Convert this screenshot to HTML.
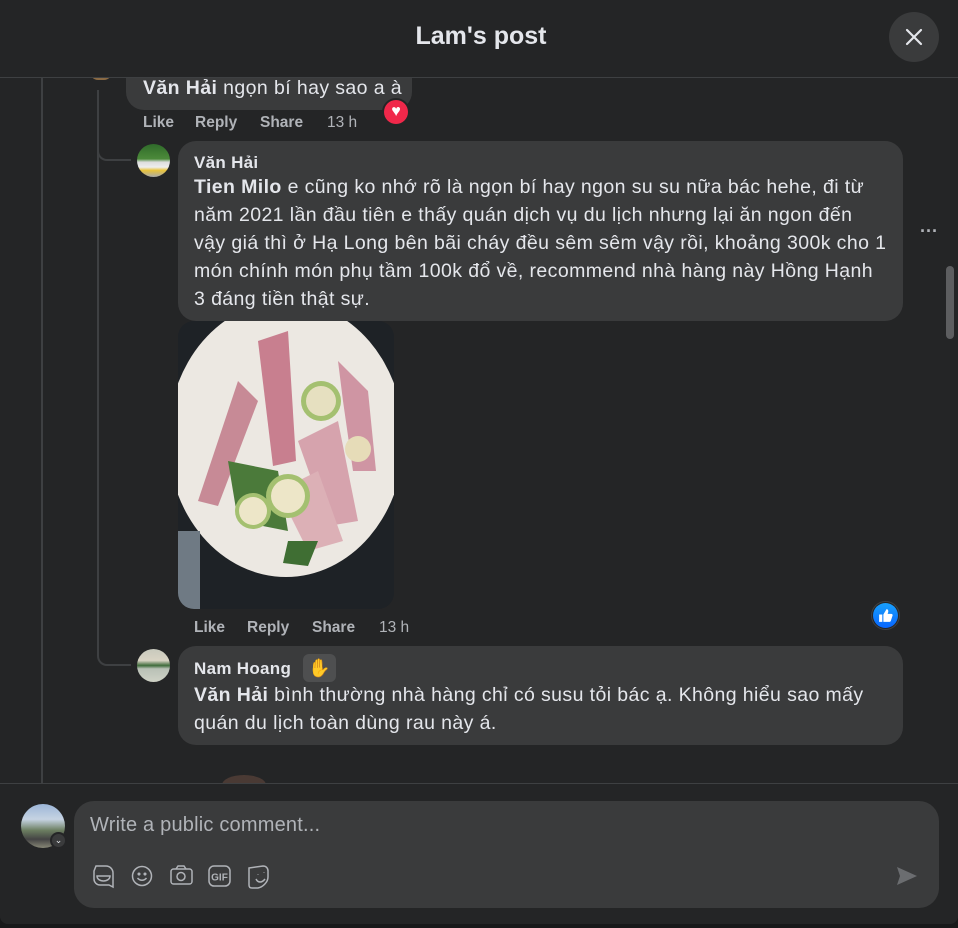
<!DOCTYPE html>
<html><head><meta charset="utf-8">
<style>
*{margin:0;padding:0;box-sizing:border-box}
body{width:958px;height:928px;background:#18191a;overflow:hidden;font-family:"Liberation Sans",sans-serif;color:#e4e6eb;position:relative}
.panel{position:absolute;left:0;top:0;width:958px;height:924px;background:#242526;border-radius:0 0 8px 8px;overflow:hidden}
.abs{position:absolute}
.hdr{left:0;top:0;width:958px;height:78px;border-bottom:1px solid #3e4042;background:#242526;z-index:5}
.title{left:0;width:962px;top:22px;text-align:center;font-size:25px;font-weight:bold;color:#e4e6eb}
.close{left:889px;top:12px;width:50px;height:50px;border-radius:50%;background:#3a3b3c}
.bub{background:#3a3b3c;border-radius:18px}
.t{font-size:19.5px;letter-spacing:.4px;line-height:28px;white-space:nowrap;color:#e4e6eb}
.t b{font-weight:bold}
.nm{font-size:17px;letter-spacing:.3px;font-weight:bold;white-space:nowrap}
.act{font-size:15.5px;font-weight:bold;color:#b0b3b8;white-space:nowrap}
.act span{position:absolute}
.line{background:#3e4042}
.av{border-radius:50%;overflow:hidden}
</style></head><body>
<div class="panel">
<div class="abs line" style="left:41px;top:78px;width:2px;height:705px"></div>
<div class="abs bub" style="left:126px;top:50px;width:286px;height:60px"></div>
<div class="abs t" style="left:143px;top:74px"><b>Văn Hải</b> ngọn bí hay sao a à</div>
<div class="abs" style="left:90px;top:72px;width:22px;height:8px;background:#8a6a44;border-radius:0 0 10px 10px"></div>
<div class="abs" style="left:382px;top:98px;width:28px;height:28px;border-radius:50%;background:#242526"></div>
<div class="abs" style="left:384px;top:100px;width:24px;height:24px;border-radius:50%;background:#f0284a;color:#fff;font-size:16px;line-height:24px;text-align:center">♥</div>
<div class="abs act" style="left:0;top:114px;width:400px;height:20px">
<span style="left:143px">Like</span><span style="left:195px">Reply</span><span style="left:260px">Share</span><span style="left:327px;font-weight:normal">13 h</span></div>
<div class="abs" style="left:97px;top:90px;width:34px;height:71px;border-left:2px solid #3e4042;border-bottom:2px solid #3e4042;border-bottom-left-radius:10px"></div>
<div class="abs line" style="left:97px;top:150px;width:2px;height:500px"></div>
<div class="abs" style="left:97px;top:620px;width:34px;height:46px;border-left:2px solid #3e4042;border-bottom:2px solid #3e4042;border-bottom-left-radius:10px"></div>
<div class="abs av" style="left:137px;top:144px;width:33px;height:33px;background:linear-gradient(#2f6b2a 0,#4c8a3a 45%,#ddd 55%,#eee 70%,#e8c33a 80%,#aaa 100%)"></div>
<div class="abs bub" style="left:178px;top:141px;width:725px;height:180px"></div>
<div class="abs nm" style="left:194px;top:153px">Văn Hải</div>
<div class="abs t" style="left:194px;top:173px">
<b>Tien Milo</b> e cũng ko nhớ rõ là ngọn bí hay ngon su su nữa bác hehe, đi từ<br>
năm 2021 lần đầu tiên e thấy quán dịch vụ du lịch nhưng lại ăn ngon đến<br>
vậy giá thì ở Hạ Long bên bãi cháy đều sêm sêm vậy rồi, khoảng 300k cho 1<br>
món chính món phụ tầm 100k đổ về, recommend nhà hàng này Hồng Hạnh<br>
3 đáng tiền thật sự.</div>
<div class="abs" style="left:920px;top:221px;color:#b0b3b8;font-size:18px;font-weight:bold">···</div>
<div class="abs" style="left:946px;top:266px;width:8px;height:73px;border-radius:4px;background:#5d5e60"></div>
<svg class="abs" style="left:178px;top:321px" width="216" height="288" viewBox="0 0 216 288">
<defs><clipPath id="c"><rect width="216" height="288" rx="16"/></clipPath></defs>
<g clip-path="url(#c)">
<rect width="216" height="288" fill="#1e2226"/>
<ellipse cx="108" cy="118" rx="118" ry="138" fill="#ece8e2"/>
<rect x="0" y="210" width="22" height="78" fill="#6f7a84"/>
<path d="M20 180 L60 60 L80 80 L40 185Z" fill="#c78a96"/>
<path d="M80 20 L110 10 L118 140 L95 145Z" fill="#c87f8f"/>
<path d="M120 120 L160 100 L180 200 L150 205Z" fill="#d6a3ad"/>
<path d="M100 170 L140 150 L165 220 L130 230Z" fill="#dcb0b6"/>
<path d="M160 40 L190 70 L198 150 L175 150 L165 80Z" fill="#cf95a3"/>
<path d="M50 140 L100 150 L110 210 L60 200Z" fill="#4b7a3a"/>
<circle cx="143" cy="80" r="20" fill="#a4c070"/><circle cx="143" cy="80" r="15" fill="#e6e0c0"/>
<circle cx="110" cy="175" r="22" fill="#a4c070"/><circle cx="110" cy="175" r="17" fill="#ede6c8"/>
<circle cx="75" cy="190" r="18" fill="#a4c070"/><circle cx="75" cy="190" r="14" fill="#ede6c8"/>
<circle cx="180" cy="128" r="13" fill="#e6dcb8"/>
<path d="M110 220 L140 220 L130 245 L105 242Z" fill="#3f6e33"/>
</g></svg>
<div class="abs act" style="left:0;top:619px;width:500px;height:20px">
<span style="left:194px">Like</span><span style="left:247px">Reply</span><span style="left:312px">Share</span><span style="left:379px;font-weight:normal">13 h</span></div>
<div class="abs" style="left:871px;top:601px;width:29px;height:29px;border-radius:50%;background:#242526;border:1px solid #3e4042"></div>
<div class="abs" style="left:873px;top:603px;width:25px;height:25px;border-radius:50%;background:linear-gradient(#18a0fb,#0866ff)"></div>
<svg class="abs" style="left:877px;top:607px" width="17" height="17" viewBox="0 0 16 16"><path d="M2 7h3v7H2zM6 7l3-5c1 0 2 1 1.5 3l-.5 1.5h3.5c1 0 1.5 1 1 2l-1.5 4.5c-.3.7-.8 1-1.5 1H6z" fill="#fff"/></svg>
<div class="abs av" style="left:137px;top:649px;width:33px;height:33px;background:linear-gradient(#c8c9bd 0,#d9d4c4 35%,#3e6b3a 50%,#b9c1b6 60%,#cfd2c6 100%)"></div>
<div class="abs bub" style="left:178px;top:646px;width:725px;height:99px"></div>
<div class="abs nm" style="left:194px;top:659px">Nam Hoang</div>
<div class="abs" style="left:303px;top:654px;width:33px;height:28px;border-radius:6px;background:#4e4f50;text-align:center;font-size:18px;line-height:28px;color:#e4e6eb">✋</div>
<div class="abs t" style="left:194px;top:681px"><b>Văn Hải</b> bình thường nhà hàng chỉ có susu tỏi bác ạ. Không hiểu sao mấy<br>quán du lịch toàn dùng rau này á.</div>
<div class="abs" style="left:222px;top:775px;width:44px;height:20px;border-radius:50%;background:#4a3a34"></div>
<div class="abs hdr"></div>
<div class="abs title" style="z-index:6">Lam's post</div>
<div class="abs close" style="z-index:6"></div>
<svg class="abs" style="left:904px;top:27px;z-index:7" width="20" height="20" viewBox="0 0 20 20"><path d="M3 3L17 17M17 3L3 17" stroke="#e4e6eb" stroke-width="2.2" stroke-linecap="round"/></svg>
<div class="abs" style="left:0;top:783px;width:958px;height:145px;background:#242526;border-top:1px solid #3e4042"></div>
<div class="abs av" style="left:21px;top:804px;width:44px;height:44px;background:linear-gradient(#9cb6d8 0,#c6d3e2 35%,#6b7d60 60%,#444 80%,#887 100%)"></div>
<div class="abs" style="left:50px;top:832px;width:17px;height:17px;border-radius:50%;background:#3a3b3c;border:2px solid #242526;color:#e4e6eb;font-size:9px;text-align:center;line-height:13px">⌄</div>
<div class="abs bub" style="left:74px;top:801px;width:865px;height:107px;border-radius:20px"></div>
<div class="abs" style="left:90px;top:814px;font-size:20px;letter-spacing:.2px;color:#b0b3b8">Write a public comment...</div>
<svg class="abs" style="left:90px;top:862px" width="190" height="28" viewBox="0 0 190 28" fill="none" stroke="#b0b3b8" stroke-width="1.5">
<path d="M6 4h10a7 7 0 0 1 7 7v14l-4-2H10a6 6 0 0 1-6-6V9Z"/><path d="M7 14h13c0 3-3 5-6.5 5S7 17 7 14Z"/>
<circle cx="52" cy="14" r="9.5"/><circle cx="49" cy="12" r=".8" fill="#b0b3b8"/><circle cx="55" cy="12" r=".8" fill="#b0b3b8"/><path d="M47.5 16c2.5 3 6.5 3 9 0"/>
<rect x="81" y="7" width="21" height="15" rx="2.5"/><path d="M86 7l2-3h6l2 3"/><circle cx="91" cy="14.5" r="4"/>
<rect x="119" y="4" width="21" height="20" rx="5"/>
<text x="129.5" y="18.5" font-family="Liberation Sans" font-size="10" font-weight="bold" fill="#b0b3b8" stroke="none" text-anchor="middle">GIF</text>
<path d="M159 6l14-2c3 0 5 2 5 5v6c0 5-5 10-10 11l-6 0c-2 0-3-1-3-3Z"/><path d="M166 17c2 4 6 4 9 0M168 12v.5M174 10v.5"/>
</svg>
<svg class="abs" style="left:895px;top:865px" width="24" height="22" viewBox="0 0 24 22"><path d="M2 2l20 9-20 9 3-9z" fill="#6b6d70"/></svg>
</div>
</body></html>
